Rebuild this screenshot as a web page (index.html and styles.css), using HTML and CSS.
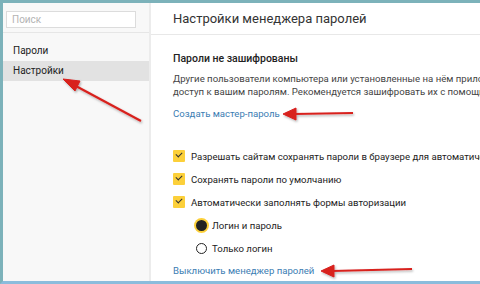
FILE: index.html
```html
<!DOCTYPE html>
<html lang="ru">
    <head>
        <meta charset="UTF-8">
        <title>Настройки менеджера паролей</title>
        <link rel="stylesheet" href="styles.css">
    </head>
    <body>
        <div class="window">
            <aside class="sidebar">
                <div class="search-container">
                    <input type="text" class="search" placeholder="Поиск">
                </div>
                <ul class="menu">
                    <li>Пароли</li>
                    <li class="active">Настройки</li>
                </ul>
            </aside>

            <main class="content">
                <div class="title-container">
                    <h1>Настройки менеджера паролей</h1>
                </div>

                <section class="settings">
                    <h2>Пароли не зашифрованы</h2>
                    <p>Другие пользователи компьютера или установленные на нём приложения могут получить<br>доступ к вашим паролям. Рекомендуется зашифровать их с помощью мастер-пароля.</p>
                    <a class="link">Создать мастер-пароль</a>

                    <div class="options">
                        <label class="check"><span class="box"></span>Разрешать сайтам сохранять пароли в браузере для автоматического входа</label>
                        <label class="check"><span class="box"></span>Сохранять пароли по умолчанию</label>
                        <label class="check"><span class="box"></span>Автоматически заполнять формы авторизации</label>
                        <label class="radio"><span class="dot selected"></span>Логин и пароль</label>
                        <label class="radio"><span class="dot"></span>Только логин</label>
                    </div>

                    <a class="link">Выключить менеджер паролей</a>
                </section>
            </main>

            <svg class="arrows" width="480" height="284" viewBox="0 0 480 284">
                <defs>
                    <filter id="shadow" x="-20%" y="-50%" width="140%" height="200%">
                        <feDropShadow dx="1" dy="1.5" stdDeviation="1" flood-color="#000" flood-opacity="0.3"/>
                    </filter>
                </defs>
                <g fill="#d8201f" stroke="#d8201f" filter="url(#shadow)">
                    <line x1="141" y1="121" x2="74" y2="85" stroke-width="2.2"/>
                    <polygon points="63,79 80,81 75,91" stroke-width="1"/>
                    <line x1="353" y1="113" x2="294" y2="114" stroke-width="2.2"/>
                    <polygon points="283,114 296,108 296,120" stroke-width="1"/>
                    <line x1="412" y1="269" x2="332" y2="271" stroke-width="2.2"/>
                    <polygon points="321,271 334,265 334,277" stroke-width="1"/>
                </g>
            </svg>
        </div>
    </body>
</html>
```

FILE: styles.css
```css
body {
    margin: 0;
    width: 480px;
    height: 284px;
    overflow: hidden;
    font-family: Roboto, 'Noto Sans', sans-serif;
    color: #333;
    background-color: #fff;
}

.window {
    position: relative;
    box-sizing: border-box;
    width: 480px;
    height: 284px;
    display: flex;
    flex-direction: row;
    border-top: 3px solid #7cb2ba;
    border-left: 3px solid #7cb2ba;
    border-bottom: 3px solid #8bbcdc;
    overflow: hidden;
}

.sidebar {
    width: 146px;
    flex-shrink: 0;
    background-color: #f8f8f8;
    border-right: 2px solid #ececec;
}

.search-container {
    height: 30px;
    padding: 5px 10px 0 3px;
    box-sizing: border-box;
    border-bottom: 1px solid #e6e6e6;
}

.search {
    box-sizing: border-box;
    width: 130px;
    height: 17px;
    border: 1px solid #dcdcdc;
    background-color: #fff;
    padding: 0 5px;
    font-family: inherit;
    font-size: 10px;
    outline: none;
}

.search::placeholder {
    color: #b4b4b4;
}

.menu {
    list-style: none;
    margin: 8px 0 0 0;
    padding: 0;
}

.menu li {
    height: 20px;
    line-height: 20px;
    padding-left: 10px;
    font-size: 10px;
    color: #222;
}

.menu li.active {
    background-color: #e2e2e2;
}

.content {
    flex: 1;
    min-width: 0;
    white-space: nowrap;
}

.title-container {
    height: 31px;
    border-bottom: 1px solid #e8e8e8;
    padding-left: 22px;
    display: flex;
    align-items: center;
}

h1 {
    margin: 0;
    font-size: 13px;
    font-weight: normal;
    color: #333;
}

.settings {
    padding-left: 22px;
    padding-top: 17px;
}

h2 {
    margin: 0;
    font-size: 10.5px;
    font-weight: 500;
    color: #222;
    line-height: 14px;
}

p {
    margin: 7px 0 0 0;
    font-size: 9.6px;
    line-height: 12.5px;
    color: #444;
}

.link {
    display: block;
    font-size: 9.6px;
    color: #3b7db3;
    line-height: 14px;
}

p + .link {
    margin-top: 9px;
}

.options {
    margin-top: 28px;
    display: flex;
    flex-direction: column;
    gap: 9px;
}

.check, .radio {
    display: flex;
    align-items: center;
    height: 14px;
    font-size: 9.6px;
    color: #222;
}

.box {
    flex-shrink: 0;
    width: 12px;
    height: 12px;
    margin-right: 6px;
    border-radius: 1px;
    background-color: #fcd03a;
    position: relative;
}

.box::after {
    content: '';
    position: absolute;
    left: 3px;
    top: 2px;
    width: 5px;
    height: 3px;
    border-left: 1.6px solid #333;
    border-bottom: 1.6px solid #333;
    transform: rotate(-45deg);
}

.radio {
    padding-left: 23px;
}

.dot {
    flex-shrink: 0;
    box-sizing: border-box;
    width: 11px;
    height: 11px;
    margin-right: 5px;
    border-radius: 50%;
    border: 1.5px solid #222;
    background-color: #fff;
}

.dot.selected {
    border: 3px solid #222;
    background-color: #222;
    box-shadow: 0 0 0 2px #fcd03a;
}

.options + .link {
    margin-top: 9px;
}

.arrows {
    position: absolute;
    left: -3px;
    top: -3px;
}
```
